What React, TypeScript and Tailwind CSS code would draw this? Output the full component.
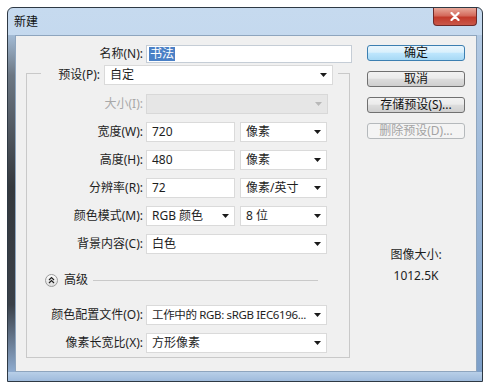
import type { ReactNode } from 'react'

function Arrow({ disabled }: { disabled?: boolean }) {
  return (
    <svg width="7" height="4" viewBox="0 0 7 4" className={disabled ? 'shrink-0 fill-[#b8b8b8]' : 'shrink-0 fill-[#1a1a1a]'}>
      <path d="M0 0h7L3.5 4z" />
    </svg>
  )
}

function Select({ value, className, disabled }: { value?: ReactNode; className: string; disabled?: boolean }) {
  return (
    <div
      className={`flex h-[20px] items-center justify-between border pl-[5px] pr-[5px] ${
        disabled ? 'border-[#d8d8d8] bg-[#e6e6e6]' : 'border-[#dadada] bg-white'
      } ${className}`}
    >
      <span className="whitespace-nowrap leading-[18px]">{value}</span>
      <Arrow disabled={disabled} />
    </div>
  )
}

function Input({ value, className }: { value: string; className: string }) {
  return <div className={`flex h-[20px] items-center border border-[#dadada] bg-white pl-[5px] leading-[18px] ${className}`}>{value}</div>
}

function Row({ label, disabled, children }: { label: string; disabled?: boolean; children: ReactNode }) {
  return (
    <div className="flex items-center gap-[3px]">
      <span className={`w-[116px] text-right ${disabled ? 'text-[#a8a8a8]' : ''}`}>{label}</span>
      {children}
    </div>
  )
}

function Button({ label, primary, disabled }: { label: string; primary?: boolean; disabled?: boolean }) {
  const tone = primary
    ? 'border-[#3c7fb1] bg-[linear-gradient(to_bottom,#eaf6fd_0%,#d9f0fc_45%,#bee6fd_50%,#a7d9f5_100%)] text-[#111]'
    : disabled
      ? 'border-[#b5b9bc] bg-[#f4f4f4] text-[#a3a3a3]'
      : 'border-[#707070] bg-[linear-gradient(to_bottom,#f2f2f2_0%,#ebebeb_45%,#dddddd_50%,#cfcfcf_100%)] text-[#111]'
  return (
    <div className={`flex h-[16px] items-center justify-center rounded-[3px] border text-[12px] leading-[14px] ${tone}`}>
      {label}
    </div>
  )
}

export default function App() {
  return (
    <div className="h-[388px] w-[490px] bg-white pl-[7px] pt-[7px] font-[family-name:'Noto_Sans','Noto_Sans_CJK_SC',sans-serif] text-[12px] leading-[16px] text-[#1e1e1e]">
      <div className="w-[476px] overflow-hidden rounded-t-[6px] border border-[#2e3944] bg-[linear-gradient(to_bottom,#c6daef,#b3cbe6)]">
        {/* title bar */}
        <div className="flex h-[27px] items-start justify-between">
          <span className="pl-[6px] pt-[6px] text-[12px] text-[#111]">新建</span>
          <div className="mr-[5px] flex h-[18px] w-[44px] items-center justify-center rounded-b-[4px] border border-t-0 border-[#6e2a2a] bg-[linear-gradient(to_bottom,#e8a89a_0%,#d46a5c_45%,#c23a2b_55%,#c9584a_100%)]">
            <svg width="10" height="9" viewBox="0 0 10 9">
              <path d="M1.5 1l7 7M8.5 1l-7 7" stroke="#fff" strokeWidth="2.2" strokeLinecap="round" />
            </svg>
          </div>
        </div>

        <div className="flex">
          <div className="w-[7px] bg-[linear-gradient(to_bottom,#a3bbd5_0%,#6c7783_12%,#34383d_45%,#3a4048_80%,#8facd0_100%)]" />

          {/* client area */}
          <div className="flex h-[337px] w-[462px] border border-[#8ea5be] bg-[#f0f0f0]">
            <div className="ml-[10px] flex w-[326px] flex-col">
              <div className="mt-[9px] flex items-center gap-[3px]">
                <span className="w-[117px] text-right">名称(N):</span>
                <div className="flex h-[18px] w-[206px] items-center border border-[#c5cdd6] bg-white pl-[2px]">
                  <span className="bg-[#4a80c6] px-[1px] leading-[14px] text-white">书法</span>
                </div>
              </div>

              <fieldset className="-mt-[2px] w-[324px] border border-[#c9c9c9] pb-[4px]">
                <legend className="ml-[14px] pr-[5px] pt-[4px]">
                  <div className="flex items-center gap-[4px]">
                    <span className="w-[59px] text-right">预设(P):</span>
                    <Select value="自定" className="w-[229px]" />
                  </div>
                </legend>

                <div className="mt-[9px] flex flex-col gap-[8px]">
                  <Row label="大小(I):" disabled>
                    <Select className="w-[182px]" disabled />
                  </Row>
                  <Row label="宽度(W):">
                    <Input value="720" className="w-[89px]" />
                    <Select value="像素" className="ml-[2px] w-[87px]" />
                  </Row>
                  <Row label="高度(H):">
                    <Input value="480" className="w-[89px]" />
                    <Select value="像素" className="ml-[2px] w-[87px]" />
                  </Row>
                  <Row label="分辨率(R):">
                    <Input value="72" className="w-[89px]" />
                    <Select value="像素/英寸" className="ml-[2px] w-[87px]" />
                  </Row>
                  <Row label="颜色模式(M):">
                    <Select value="RGB 颜色" className="w-[89px]" />
                    <Select value="8 位" className="ml-[2px] w-[87px]" />
                  </Row>
                  <Row label="背景内容(C):">
                    <Select value="白色" className="w-[181px]" />
                  </Row>
                </div>

                <div className="ml-[18px] mr-[31px] mt-[19px] flex h-[14px] items-center">
                  <svg width="13" height="13" viewBox="0 0 13 13" className="shrink-0">
                    <defs>
                      <linearGradient id="adv" x1="0" y1="0" x2="0" y2="1">
                        <stop offset="0" stopColor="#ffffff" />
                        <stop offset="1" stopColor="#dcdcdc" />
                      </linearGradient>
                    </defs>
                    <circle cx="6.5" cy="6.5" r="6" fill="url(#adv)" stroke="#9a9a9a" />
                    <path d="M4 6l2.5-2.5L9 6M4 9l2.5-2.5L9 9" fill="none" stroke="#222" strokeWidth="1.2" />
                  </svg>
                  <span className="ml-[6px]">高级</span>
                  <div className="ml-[5px] h-px flex-1 bg-[#c9c9c9]" />
                </div>

                <div className="mt-[18px] flex flex-col gap-[8px]">
                  <Row label="颜色配置文件(O):">
                    <Select value={<span className="text-[11.5px] tracking-[-0.35px]">工作中的 RGB: sRGB IEC6196...</span>} className="w-[181px]" />
                  </Row>
                  <Row label="像素长宽比(X):">
                    <Select value="方形像素" className="w-[181px]" />
                  </Row>
                </div>
              </fieldset>
            </div>

            <div className="ml-[15px] mt-[9px] flex w-[98px] flex-col">
              <div className="flex flex-col gap-[10px]">
                <Button label="确定" primary />
                <Button label="取消" />
                <Button label="存储预设(S)..." />
                <Button label="删除预设(D)..." disabled />
              </div>
              <div className="mt-[108px] flex flex-col items-center gap-[5px]">
                <span>图像大小:</span>
                <span>1012.5K</span>
              </div>
            </div>
          </div>

          <div className="w-[5px] bg-[linear-gradient(to_bottom,#b2c9e3,#7d9fc8)]" />
        </div>

        <div className="h-[9px] bg-[linear-gradient(to_bottom,#b8cfe8,#9fbbdc)]" />
      </div>
    </div>
  )
}
